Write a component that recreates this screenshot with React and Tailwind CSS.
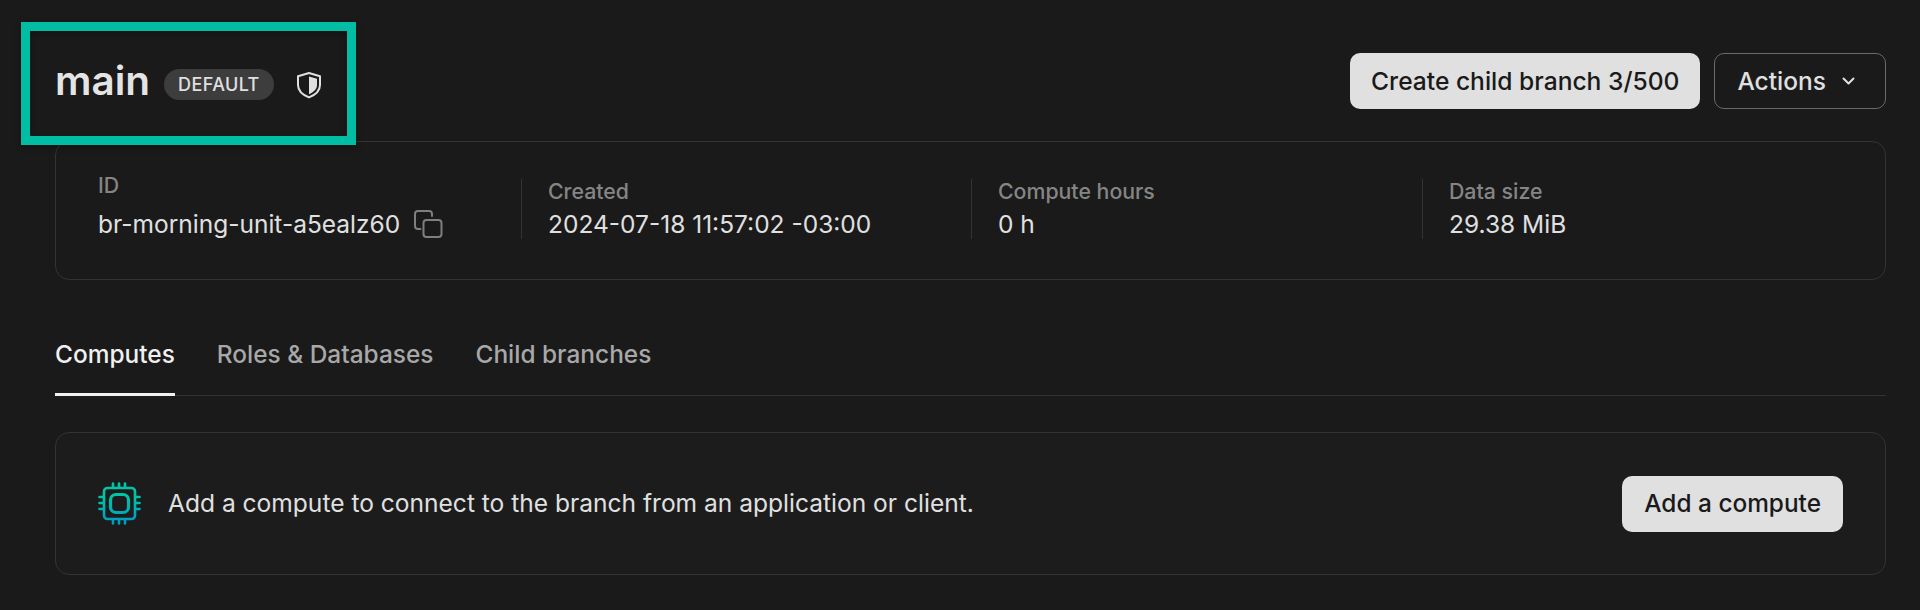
const chipPins = [15, 21, 27];

function ShieldIcon() {
  return (
    <svg width="26" height="28" viewBox="0 0 26 28" fill="none" className="shrink-0">
      <path d="M13 2 L24 5.2 V14 C24 19.8 19 24 13 26.4 C7 24 2 19.8 2 14 V5.2 Z" stroke="#e0e0e0" strokeWidth="2" strokeLinejoin="round" />
      <path d="M13 5.5 L21 7.8 V14 C21 18.2 17.4 21.2 13 23.2 Z" fill="#e0e0e0" />
    </svg>
  );
}

function CopyIcon() {
  return (
    <svg width="30" height="29" viewBox="0 0 30 29" fill="none" stroke="#7f7f7f" strokeWidth="2" className="shrink-0">
      <path d="M6.5 19 H4 C2.3 19 1 17.7 1 16 V4 C1 2.3 2.3 1 4 1 H15 C16.7 1 18 2.3 18 4 V6" strokeLinecap="round" />
      <rect x="9.5" y="10" width="18" height="17" rx="3" />
    </svg>
  );
}

function ChipIcon() {
  return (
    <svg width="43" height="43" viewBox="0 0 43 43" fill="none" className="shrink-0">
      <defs>
        <linearGradient id="chip" gradientUnits="userSpaceOnUse" x1="0" y1="0" x2="0" y2="43">
          <stop offset="0.35" stopColor="#00c4a4" />
          <stop offset="1" stopColor="#0097c4" />
        </linearGradient>
      </defs>
      <g stroke="url(#chip)" strokeLinecap="round" strokeLinejoin="round">
        <rect x="6" y="6" width="31" height="31" rx="3.5" strokeWidth="2.6" />
        <rect x="12.5" y="12.5" width="18" height="18" rx="5.5" strokeWidth="3.2" />
        {chipPins.map((p) => (
          <g key={p} strokeWidth="2.6">
            <path d={`M${p} 1.5 V5`} />
            <path d={`M${p} 38 V41.5`} />
            <path d={`M1.5 ${p} H5`} />
            <path d={`M38 ${p} H41.5`} />
          </g>
        ))}
      </g>
    </svg>
  );
}

function Stat({ label, value, children, first }) {
  return (
    <div className={`flex flex-col ${first ? "" : "border-l border-[#333333] pl-[26px]"}`}>
      <div className={`text-[21.3px] leading-[24px] font-medium text-[#858585] ${first ? "-mt-[6px] mb-[6px]" : ""}`}>{label}</div>
      <div className="mt-[6px] flex items-center gap-[14px] text-[24.5px] leading-[30px] text-[#e0e0e0]">
        {value}
        {children}
      </div>
    </div>
  );
}

export default function App() {
  return (
    <div className="h-[610px] w-[1920px] overflow-hidden bg-[#1a1a1a] pl-[55px] pr-[34px] font-['Inter',sans-serif]">
      <div className="flex h-[141px] items-center justify-between pt-[21px]">
        <div className="flex items-center">
          <h1 className="text-[40.5px] leading-none font-semibold text-[#e4e4e4]">main</h1>
          <span className="ml-[14px] mt-[7px] rounded-full bg-[#3d3d3d] px-[14px] py-[5px] text-[18px] leading-[21px] font-medium tracking-[0.4px] text-[#e0e0e0]">
            DEFAULT
          </span>
          <span className="ml-[22px] mt-[7px] flex">
            <ShieldIcon />
          </span>
        </div>
        <div className="flex items-center gap-[14px]">
          <button className="h-[56px] rounded-[10px] bg-[#e0e0e0] px-[21px] text-[24.6px] font-medium text-[#1a1a1a]">
            Create child branch 3/500
          </button>
          <button className="flex h-[56px] items-center gap-[14px] rounded-[10px] border border-[#6a6a6a] pl-[22px] pr-[28px] text-[24.5px] font-medium text-[#e0e0e0]">
            Actions
            <svg width="17" height="10" viewBox="0 0 17 10" fill="none" stroke="#e0e0e0" strokeWidth="2" strokeLinecap="round" strokeLinejoin="round">
              <path d="M3.5 2.5 L8.5 7.5 L13.5 2.5" />
            </svg>
          </button>
        </div>
      </div>

      <div className="flex h-[139px] items-center rounded-[14px] border border-[#333333] pb-[3px] pl-[42px]">
        <div className="grid w-full grid-cols-[423px_450px_451px_1fr] items-stretch">
          <Stat first label="ID" value="br-morning-unit-a5ealz60">
            <CopyIcon />
          </Stat>
          <Stat label="Created" value="2024-07-18 11:57:02 -03:00" />
          <Stat label="Compute hours" value="0 h" />
          <Stat label="Data size" value="29.38 MiB" />
        </div>
      </div>

      <div className="mt-[57px] flex h-[59px] gap-[42px] border-b border-[#333333] text-[24.45px] font-medium text-[#a8a8a8]">
        <div className="-mb-px border-b-[3px] border-[#f0f0f0] leading-[34px] text-[#f0f0f0]">Computes</div>
        <div className="leading-[34px]">Roles &amp; Databases</div>
        <div className="leading-[34px]">Child branches</div>
      </div>

      <div className="mt-[36px] flex h-[143px] items-center justify-between rounded-[14px] border border-[#333333] bg-[#1c1c1c] pl-[42px] pr-[42px]">
        <div className="flex items-center gap-[27px] text-[24.56px] text-[#e0e0e0]">
          <ChipIcon />
          <span>Add a compute to connect to the branch from an application or client.</span>
        </div>
        <button className="h-[56px] rounded-[10px] bg-[#e0e0e0] px-[22px] text-[24.4px] font-medium text-[#1a1a1a]">
          Add a compute
        </button>
      </div>

      <div className="pointer-events-none absolute top-[22px] left-[21px] h-[123px] w-[335px] border-[9px] border-[#00bda3] bg-transparent shadow-[0_2px_6px_rgba(0,0,0,0.35),inset_0_2px_6px_rgba(0,0,0,0.35)]" />
    </div>
  );
}
